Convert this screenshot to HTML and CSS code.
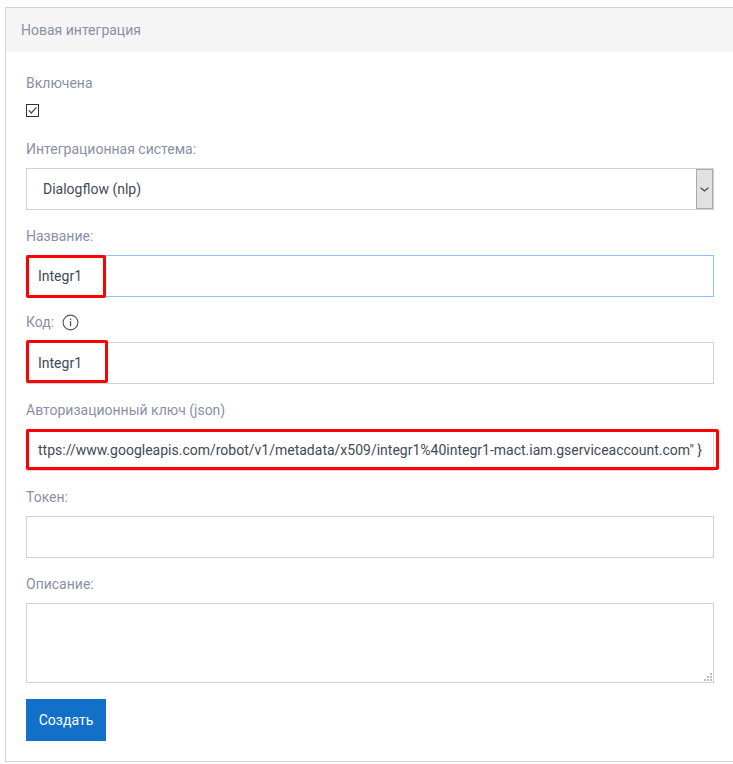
FILE: index.html
```html
<!DOCTYPE html>
<html lang="ru">
<head>
<meta charset="utf-8">
<title>Новая интеграция</title>
<link rel="stylesheet" href="styles.css">
</head>
<body>
<section class="card">
  <header class="card-header">Новая интеграция</header>
  <form class="card-body">
    <div class="group group-check">
      <div class="label">Включена</div>
      <span class="checkbox">
        <svg width="13" height="13" viewBox="0 0 13 13"><rect x="0.5" y="0.5" width="12" height="12" fill="#fff" stroke="#333"/><path d="M2.8 6.4 5.3 9 10.4 3.4" fill="none" stroke="#444" stroke-width="1.2"/></svg>
      </span>
    </div>
    <div class="group">
      <div class="label">Интеграционная система:</div>
      <div class="select">
        <span class="select-value">Dialogflow (nlp)</span>
        <span class="select-arrow">
          <svg width="9" height="5" viewBox="0 0 9 5"><path d="M0.6 0.8 4.5 4 8.4 0.8" fill="none" stroke="#444" stroke-width="1.1"/></svg>
        </span>
      </div>
    </div>
    <div class="group">
      <div class="label">Название:</div>
      <div class="field">
        <input class="input input-focus" type="text" value="Integr1">
        <span class="mark mark-name"></span>
      </div>
    </div>
    <div class="group">
      <div class="label label-info">Код:
        <svg class="info" width="17" height="17" viewBox="0 0 17 17"><circle cx="8.5" cy="8.5" r="7.4" fill="none" stroke="#555" stroke-width="1.1"/><rect x="7.9" y="7.2" width="1.3" height="5" fill="#555"/><rect x="7.9" y="4.6" width="1.3" height="1.4" fill="#555"/></svg>
      </div>
      <div class="field">
        <input class="input" type="text" value="Integr1">
        <span class="mark mark-code"></span>
      </div>
    </div>
    <div class="group">
      <div class="label">Авторизационный ключ (json)</div>
      <div class="field">
        <input class="input input-key" type="text" value="ttps://www.googleapis.com/robot/v1/metadata/x509/integr1%40integr1-mact.iam.gserviceaccount.com&quot; }">
        <span class="mark mark-key"></span>
      </div>
    </div>
    <div class="group">
      <div class="label">Токен:</div>
      <input class="input" type="text">
    </div>
    <div class="group">
      <div class="label">Описание:</div>
      <div class="field">
        <textarea class="textarea"></textarea>
        <svg class="grip" width="8" height="8" viewBox="0 0 8 8"><path d="M6 0h2v2H6zM3 3h2v2H3zM6 3h2v2H6zM0 6h2v2H0zM3 6h2v2H3zM6 6h2v2H6z" fill="#bdbdbd"/></svg>
      </div>
    </div>
    <button class="btn" type="button">Создать</button>
  </form>
</section>
</body>
</html>
```
FILE: styles.css
```css
* { box-sizing: border-box; }
html, body { margin: 0; padding: 0; overflow: hidden; background: #fff; }
body { font-family: Roboto, "Liberation Sans", sans-serif; font-size: 14px; color: #3f4a58; }
.card {
  width: 740px;
  margin: 7px 0 0 5px;
  border: 1px solid #d2d4d8;
  border-right: 0;
  background: #fff;
}
.card-header {
  height: 44px;
  padding: 0 15px;
  line-height: 44px;
  background: #f5f5f5;
  color: #8a90a5;
}
.card-body {
  display: flex;
  flex-direction: column;
  width: 708px;
  padding: 21px 0 20px 20px;
}
.group { margin-bottom: 15px; }
.group-check { margin-bottom: 21px; }
.label { height: 20px; line-height: 20px; margin: 1px 0 9px; color: #8a90a5; }
.group-check .label { margin: 0 0 11px; }
.label-info { display: flex; align-items: center; gap: 8px; margin: 0 0 10px; }
.checkbox { display: block; height: 13px; }
.checkbox svg { display: block; }
.select {
  display: flex;
  justify-content: space-between;
  height: 42px;
  padding: 0 0 0 16px;
  border: 1px solid #cfd2d6;
  background: #fff;
}
.select-value { align-self: center; }
.select-arrow {
  display: flex;
  align-items: center;
  justify-content: center;
  width: 17px;
  background: #e1e1e1;
  border: 1px solid #ababab;
}
.field { position: relative; }
.input {
  display: block;
  width: 100%;
  height: 42px;
  padding: 0 11px;
  border: 1px solid #cfd2d6;
  border-radius: 0;
  outline: 0;
  background: #fff;
  font: inherit;
  color: inherit;
}
.input-focus { border-color: #8fc3ef; }
.input-key { padding-right: 2px; }
.textarea {
  display: block;
  width: 100%;
  height: 80px;
  padding: 6px 11px;
  border: 1px solid #cfd2d6;
  border-radius: 0;
  outline: 0;
  resize: none;
  font: inherit;
  color: inherit;
}
.grip {
  position: absolute;
  right: 2px;
  bottom: 2px;
  pointer-events: none;
}
.mark {
  position: absolute;
  left: 0;
  border: 3px solid #fe0000;
  border-radius: 2px;
  pointer-events: none;
}
.mark-name { top: 0; width: 80px; height: 43px; }
.mark-code { top: -2px; width: 82px; height: 43px; }
.mark-key { top: 0; width: 693px; height: 41px; }
.btn {
  align-self: flex-start;
  width: 80px;
  height: 42px;
  margin-top: 1px;
  padding: 0;
  border: 0;
  border-radius: 0;
  background: #1370c8;
  color: #fff;
  font: inherit;
}
```
